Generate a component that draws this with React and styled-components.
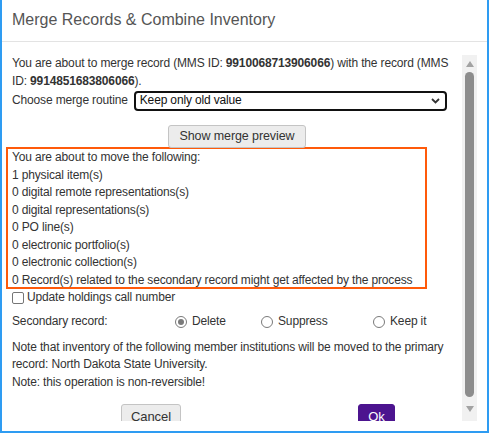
import React from "react";
import styled, { createGlobalStyle } from "styled-components";

const GlobalStyle = createGlobalStyle`
  html, body { margin: 0; padding: 0; background: #fff; }
  body { font-family: "Liberation Sans", Arial, sans-serif; }
  * { box-sizing: border-box; }
`;

const Dialog = styled.div`
  width: 489px;
  height: 433px;
  border: 2px solid #2e9cf2;
  border-top: none;
  background: #fff;
  display: flex;
  flex-direction: column;
  color: #333;
  font-size: 12px;
  letter-spacing: -0.15px;
`;

const Header = styled.div`
  height: 42px;
  flex: none;
  border-bottom: 1px solid #e3e3e3;
  display: flex;
  align-items: center;
  padding-left: 10px;
  padding-bottom: 1px;
`;

const Title = styled.h1`
  margin: 0;
  font-size: 16px;
  font-weight: normal;
  color: #555;
  letter-spacing: 0;
`;

const Body = styled.div`
  flex: 1;
  min-height: 0;
  display: flex;
  padding: 13px 10px 10px 4px;
`;

const Scroller = styled.div`
  flex: 1;
  min-width: 0;
  overflow: hidden;
  padding-left: 6px;
  line-height: 17.5px;
`;

const Para = styled.p`
  margin: 0;
`;

const Strong = styled.b`
  font-weight: bold;
`;

const ChooseRow = styled.div`
  display: flex;
  align-items: center;
  height: 20px;
  margin-top: 1px;
  gap: 6px;
`;

const SelectBox = styled.div`
  width: 313px;
  height: 20px;
  border: 2px solid #111;
  border-radius: 4px;
  display: flex;
  align-items: center;
  justify-content: space-between;
  padding: 0 5px 0 4px;
  color: #111;
`;

const Center = styled.div`
  display: flex;
  justify-content: center;
  margin-top: 14px;
  margin-bottom: -1px;
`;

const GrayButton = styled.button`
  font-family: inherit;
  font-size: ${(p) => p.$size || 13}px;
  letter-spacing: -0.1px;
  color: #333;
  background: #ececec;
  border: 1px solid #c4c4c4;
  border-radius: 3px;
  height: ${(p) => p.$h || 23}px;
  width: ${(p) => p.$w}px;
  padding: 0;
  line-height: 1;
`;

const PrimaryButton = styled.button`
  font-family: inherit;
  font-size: 13px;
  color: #fff;
  background: #4c148f;
  border: 1px solid #4c148f;
  border-radius: 3px;
  height: 24px;
  width: 37px;
  padding: 0;
  line-height: 1;
`;

const Highlight = styled.div`
  margin-left: -6px;
  width: 421px;
  height: 142px;
  border: 2px solid #ff5a0a;
  padding-left: 4px;
`;

const CheckRow = styled.label`
  display: flex;
  align-items: center;
  gap: 3px;
  height: 17.5px;
`;

const CheckBox = styled.span`
  width: 12px;
  height: 12px;
  border: 1px solid #767676;
  border-radius: 2px;
  background: #fff;
  flex: none;
  margin-top: 1px;
`;

const RadioGrid = styled.div`
  display: grid;
  grid-template-columns: 163px 86px 112px auto;
  align-items: center;
  margin-top: 6px;
  height: 18px;
`;

const RadioOption = styled.label`
  display: flex;
  align-items: center;
  gap: 5px;
`;

const RadioDot = styled.span`
  width: 12px;
  height: 12px;
  border-radius: 50%;
  border: 1px solid #7a7a7a;
  background: #fff;
  flex: none;
  display: flex;
  align-items: center;
  justify-content: center;
  &::after {
    content: "";
    width: 6px;
    height: 6px;
    border-radius: 50%;
    background: ${(p) => (p.$checked ? "#7a7a7a" : "transparent")};
  }
`;

const Notes = styled.div`
  margin-top: 8px;
`;

const Footer = styled.div`
  display: flex;
  align-items: flex-start;
  gap: 177px;
  padding-left: 109px;
  margin-top: 13px;
`;

const ScrollTrack = styled.div`
  width: 15px;
  flex: none;
  background: #f1f1f1;
  display: flex;
  flex-direction: column;
  align-items: center;
`;

const Arrow = styled.div`
  height: ${(p) => p.$h}px;
  display: flex;
  align-items: center;
  justify-content: center;
  flex: none;
`;

const Thumb = styled.div`
  flex: 1;
  width: 9px;
  border-radius: 5px;
  background: #8d8d8d;
`;

const Triangle = ({ down }) => (
  <svg width="8" height="6" viewBox="0 0 8 6">
    <path d={down ? "M0 0 L8 0 L4 6 Z" : "M0 6 L8 6 L4 0 Z"} fill="#a3a3a3" />
  </svg>
);

export default function App() {
  return (
    <>
      <GlobalStyle />
      <Dialog>
        <Header>
          <Title>Merge Records &amp; Combine Inventory</Title>
        </Header>
        <Body>
          <Scroller>
            <Para>
              You are about to merge record (MMS ID: <Strong>9910068713906066</Strong>) with the record (MMS ID:{" "}
              <Strong>9914851683806066</Strong>).
            </Para>
            <ChooseRow>
              <span>Choose merge routine</span>
              <SelectBox>
                <span>Keep only old value</span>
                <svg width="9" height="6" viewBox="0 0 9 6">
                  <path d="M1 1 L4.5 4.5 L8 1" fill="none" stroke="#333" strokeWidth="1.8" />
                </svg>
              </SelectBox>
            </ChooseRow>
            <Center>
              <GrayButton $size={12.5} $w={138}>Show merge preview</GrayButton>
            </Center>
            <Highlight>
              <div>You are about to move the following:</div>
              <div>1 physical item(s)</div>
              <div>0 digital remote representations(s)</div>
              <div>0 digital representations(s)</div>
              <div>0 PO line(s)</div>
              <div>0 electronic portfolio(s)</div>
              <div>0 electronic collection(s)</div>
              <div>0 Record(s) related to the secondary record might get affected by the process</div>
            </Highlight>
            <CheckRow>
              <CheckBox />
              <span>Update holdings call number</span>
            </CheckRow>
            <RadioGrid>
              <span>Secondary record:</span>
              <RadioOption>
                <RadioDot $checked />
                <span>Delete</span>
              </RadioOption>
              <RadioOption>
                <RadioDot />
                <span>Suppress</span>
              </RadioOption>
              <RadioOption>
                <RadioDot />
                <span>Keep it</span>
              </RadioOption>
            </RadioGrid>
            <Notes>
              <Para>
                Note that inventory of the following member institutions will be moved to the primary record: North
                Dakota State University.
              </Para>
              <Para>Note: this operation is non-reversible!</Para>
            </Notes>
            <Footer>
              <GrayButton $h={24} $w={60}>Cancel</GrayButton>
              <PrimaryButton>Ok</PrimaryButton>
            </Footer>
          </Scroller>
          <ScrollTrack>
            <Arrow $h={17}>
              <Triangle />
            </Arrow>
            <Thumb />
            <Arrow $h={24}>
              <Triangle down />
            </Arrow>
          </ScrollTrack>
        </Body>
      </Dialog>
    </>
  );
}
